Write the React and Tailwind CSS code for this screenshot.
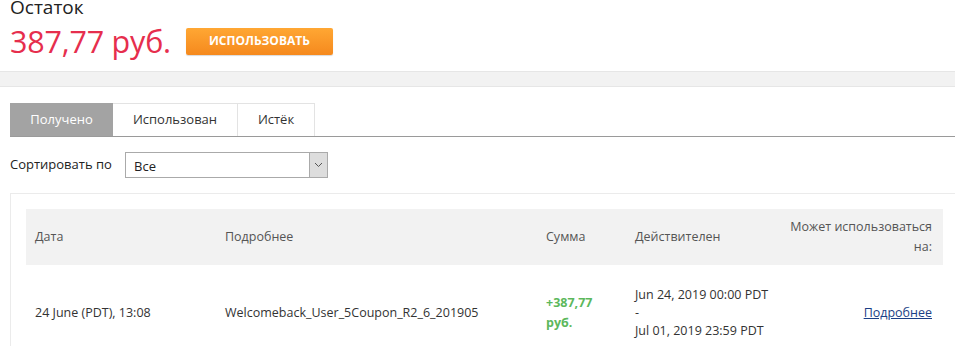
import React, { useState } from "react";

const tabs = [
  { label: "Получено", w: "w-[103px]" },
  { label: "Использован", w: "w-[125px]" },
  { label: "Истёк", w: "w-[77px]" },
];

function App() {
  const [activeTab, setActiveTab] = useState(0);

  return (
    <div className="w-[955px] h-[346px] overflow-hidden bg-white text-[#333] font-['Open_Sans',sans-serif]">
      {/* Balance */}
      <div className="px-[10px] -mt-[5px]">
        <div className="text-[19px] leading-[24px] text-[#222]">Остаток</div>
        <div className="flex items-center mt-[4px] h-[36px]">
          <span className="text-[30.5px] leading-[36px] text-[#e62e4d] tracking-[-0.2px]">387,77 руб.</span>
          <button className="ml-[15px] w-[147px] h-[27px] rounded-[2px] bg-gradient-to-b from-[#ffa733] to-[#f5891d] text-white text-[12px] font-bold uppercase shadow-[0_1px_1px_rgba(0,0,0,0.15)]">
            Использовать
          </button>
        </div>
      </div>

      {/* Separator band */}
      <div className="mt-[12px] h-[16px] bg-[#f2f2f2] border-t border-b border-[#e6e6e6]"></div>

      {/* Tabs */}
      <div className="mt-[16px] ml-[10px] flex border-b border-[#9a9a9a]">
        {tabs.map((t, i) => (
          <button
            key={t.label}
            onClick={() => setActiveTab(i)}
            className={
              i === activeTab
                ? `${t.w} h-[33px] bg-[#a3a3a3] text-white text-[13px] border border-[#a3a3a3]`
                : `${t.w} h-[33px] bg-white text-[#333] text-[13px] border-t border-r border-[#e3e3e3]`
            }
          >
            {t.label}
          </button>
        ))}
      </div>

      {/* Sort */}
      <div className="flex items-center ml-[10px] mt-[15px] h-[26px]">
        <span className="text-[13px] text-[#222] w-[115px]">Сортировать по</span>
        <div className="flex w-[203px] h-[26px] border border-[#aaa]">
          <div className="flex-1 px-[8px] text-[13px] leading-[26px] text-[#222]">Все</div>
          <div className="w-[18px] bg-[#ddd] border-l border-[#aaa] flex items-center justify-center">
            <svg width="9" height="6" viewBox="0 0 9 6">
              <path d="M1 1l3.5 3.5L8 1" stroke="#555" strokeWidth="1" fill="none" />
            </svg>
          </div>
        </div>
      </div>

      {/* Table card */}
      <div className="mt-[15px] ml-[10px] border-t border-l border-[#ebebeb] pt-[15px] pl-[15px] pr-[12px]">
        <div className="grid grid-cols-[190px_321px_89px_1fr_160px] bg-[#f2f2f2] h-[56px] items-center px-[9px] text-[12.5px] text-[#555]">
          <span>Дата</span>
          <span>Подробнее</span>
          <span>Сумма</span>
          <span>Действителен</span>
          <span className="text-right leading-[20px] pr-[2px] text-[12.5px]">
            Может использоваться
            <br />
            на:
          </span>
        </div>
        <div className="grid grid-cols-[190px_321px_89px_1fr_160px] h-[96px] items-center px-[9px] text-[12.5px] text-[#333]">
          <span>24 June (PDT), 13:08</span>
          <span>Welcomeback_User_5Coupon_R2_6_201905</span>
          <span className="text-[#5cb85c] font-bold leading-[20px] w-[60px]">+387,77 руб.</span>
          <span className="leading-[18px]">
            Jun 24, 2019 00:00 PDT
            <br />-<br />
            Jul 01, 2019 23:59 PDT
          </span>
          <span className="text-right pr-[2px]">
            <a href="#" className="text-[#1b3f86] underline">Подробнее</a>
          </span>
        </div>
      </div>
    </div>
  );
}

export default App;
